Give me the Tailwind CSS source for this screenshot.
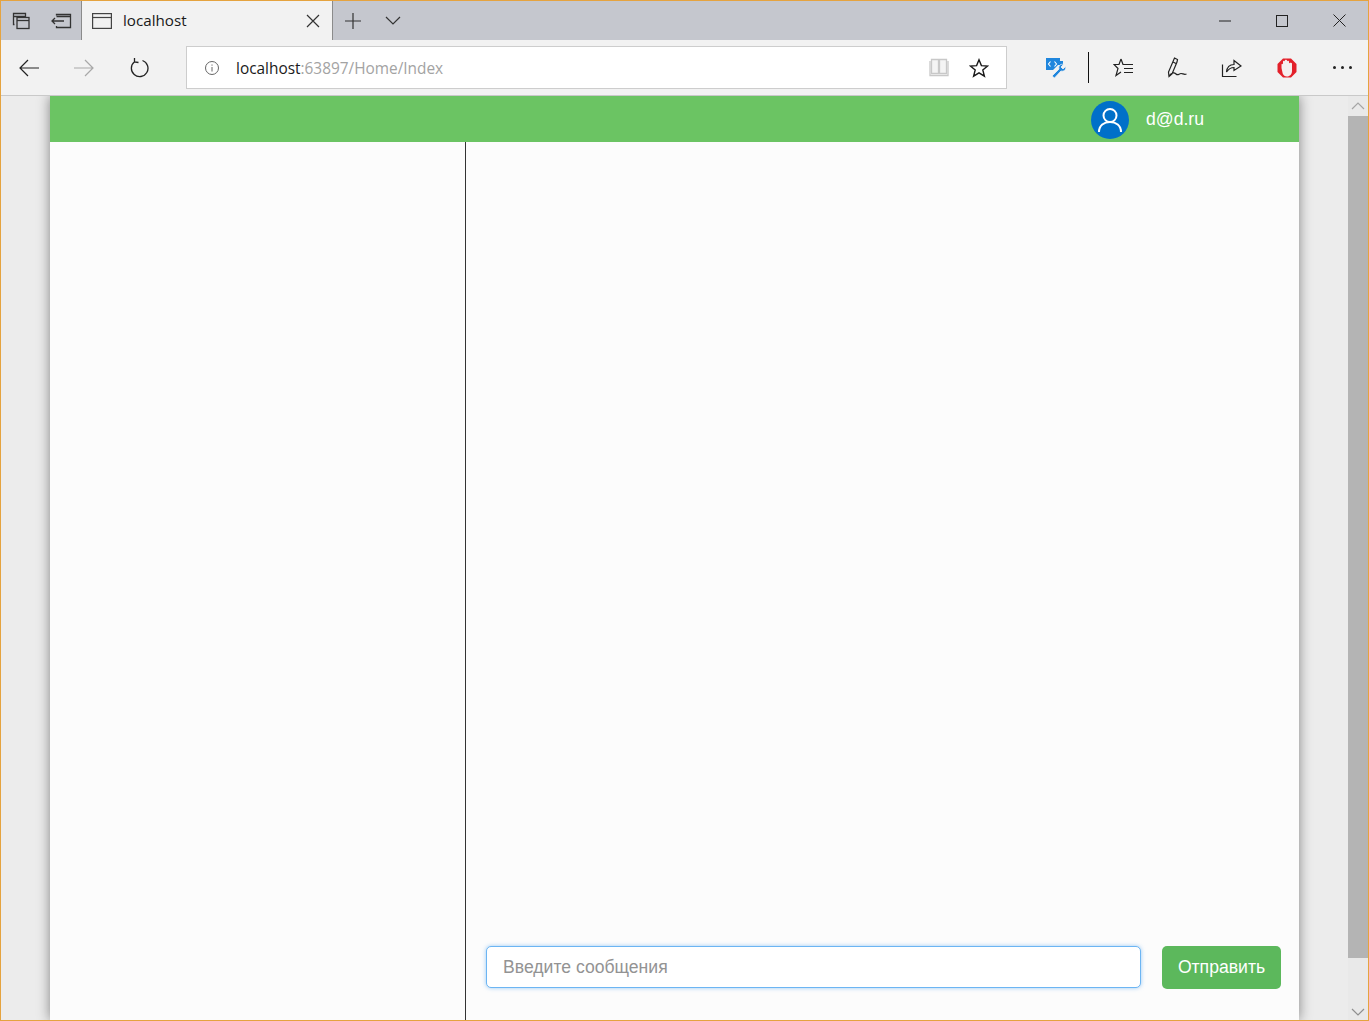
<!DOCTYPE html>
<html lang="en">
<head>
    <meta charset="UTF-8">
    <meta name="viewport" content="width=device-width, initial-scale=1.0">
    <title>localhost</title>
    <script src="https://cdn.jsdelivr.net/npm/@tailwindcss/browser@4"></script>
</head>
<body class="bg-[#ececec] overflow-hidden">
    <div class="w-[1369px] h-[1021px] border border-[#e5a33f] flex flex-col font-['Open_Sans',sans-serif] overflow-hidden">
        <!-- tab strip -->
        <div class="h-[39px] shrink-0 flex bg-[#c5c7ce] text-[#1a1a1a]">
            <div class="w-[40px] flex items-center justify-center">
                <svg width="20" height="20" viewBox="0 0 20 20" fill="none" stroke="#333" stroke-width="1.3"><path d="M3.5 13.5H2.5V2.5H14.5V6M2.5 5.5H14.5"/><rect x="6" y="6.5" width="12" height="11"/><path d="M6 9.5H18"/></svg>
            </div>
            <div class="w-[40px] flex items-center justify-center">
                <svg width="22" height="20" viewBox="0 0 22 20" fill="none" stroke="#333" stroke-width="1.3"><path d="M6.5 4.5V3.5H20.5V16.5H6.5V15M6.5 5.5H20.5M14 10H2M5 7L2 10L5 13"/></svg>
            </div>
            <div class="w-[252px] h-full bg-[#f2f2f2] border-x border-[#8b8b8b] flex items-center pl-[10px] pr-[12px]">
                <svg width="20" height="18" viewBox="0 0 20 18" fill="none" stroke="#444" stroke-width="1.2"><rect x="0.6" y="1.6" width="18.8" height="14.8"/><path d="M0.6 5.5H19.4"/></svg>
                <span class="ml-[11px] text-[15.2px] flex-1">localhost</span>
                <svg width="14" height="14" viewBox="0 0 14 14" stroke="#333" stroke-width="1.2"><path d="M1 1L13 13M13 1L1 13"/></svg>
            </div>
            <div class="w-[40px] flex items-center justify-center">
                <svg width="18" height="18" viewBox="0 0 18 18" stroke="#333" stroke-width="1.2"><path d="M9 1V17M1 9H17"/></svg>
            </div>
            <div class="w-[39px] flex items-center justify-center">
                <svg width="16" height="10" viewBox="0 0 16 10" fill="none" stroke="#333" stroke-width="1.2"><path d="M1 1L8 8L15 1"/></svg>
            </div>
            <div class="flex-1"></div>
            <div class="w-[57px] flex items-center justify-center">
                <svg width="12" height="2" viewBox="0 0 12 2" stroke="#222"><path d="M0 1H12"/></svg>
            </div>
            <div class="w-[57px] mr-[1px] flex items-center justify-center">
                <svg width="12" height="12" viewBox="0 0 12 12" fill="none" stroke="#222"><rect x="0.5" y="0.5" width="11" height="11"/></svg>
            </div>
            <div class="w-[57px] flex items-center justify-center">
                <svg width="13" height="13" viewBox="0 0 13 13" stroke="#222"><path d="M0.5 0.5L12.5 12.5M12.5 0.5L0.5 12.5"/></svg>
            </div>
        </div>

        <!-- address bar row -->
        <div class="relative z-10 h-[56px] shrink-0 bg-[#f2f2f2] border-b border-[#c9c9c9] flex items-center">
            <div class="w-[55px] flex justify-center">
                <svg width="20" height="18" viewBox="0 0 20 18" fill="none" stroke="#222" stroke-width="1.2"><path d="M20 9H1M9 1L1 9L9 17"/></svg>
            </div>
            <div class="w-[55px] flex justify-center">
                <svg width="20" height="18" viewBox="0 0 20 18" fill="none" stroke="#a8a8a8" stroke-width="1.2"><path d="M0 9H19M11 1L19 9L11 17"/></svg>
            </div>
            <div class="w-[55px] flex justify-center">
                <svg width="20" height="20" viewBox="0 0 20 20" fill="none" stroke="#222" stroke-width="1.3"><path d="M5.5 3.8A8.3 8.3 0 1 0 13.5 2.5M5.5 0L5.5 4L9.5 4.5"/></svg>
            </div>
            <div class="ml-[20px] w-[821px] h-[43px] bg-white border border-[#cdcdcd] flex items-center pl-[17px] pr-[17px]">
                <svg width="16" height="16" viewBox="0 0 16 16" fill="none" stroke="#666"><circle cx="8" cy="8" r="6.5"/><path d="M8 7V11.5M8 4.5V5.7"/></svg>
                <span class="ml-[16px] pt-[2px] text-[15.4px] flex-1 leading-none"><span class="text-[#1a1a1a]">localhost</span><span class="text-[#a3a3a3]">:63897/Home/Index</span></span>
                <svg width="20" height="19" viewBox="0 0 20 19" fill="#f4f4f4" stroke="#c8c8c8" stroke-width="1.3"><path d="M2.5 1.5H9.5V15.5H2.5ZM10.5 1.5H17.5V15.5H10.5Z"/><path d="M1 3V17.5H19V3" fill="none"/></svg>
                <svg class="ml-[20px]" width="20" height="20" viewBox="0 0 20 20" fill="none" stroke="#1a1a1a" stroke-width="1.4"><path d="M10 1.8L12.4 7.6L18.6 8L13.8 12L15.4 18.2L10 14.8L4.6 18.2L6.2 12L1.4 8L7.6 7.6Z"/></svg>
            </div>
            <div class="ml-[35px] w-[28px] flex justify-center">
                <svg width="22" height="21" viewBox="0 0 22 21" fill="none"><path d="M1 1H15V4H18V8H13L8 13H1Z" fill="#1f86dd"/><path d="M5.5 4.5L3.5 7L5.5 9.5M9.5 4.5L11.5 7L9.5 9.5" stroke="#fff" stroke-width="1.1"/><path d="M7 19L14 12C13 9 15.5 6.5 18.5 7.5L16 10L18 12L20.5 9.5C21.5 12.5 19 15 16 14L9.5 21Z" fill="#1f86dd" stroke="#f2f2f2" stroke-width="0.8"/></svg>
            </div>
            <div class="ml-[18px] w-px h-[31px] bg-[#111]"></div>
            <div class="ml-[20px] w-[28px] flex justify-center">
                <svg width="21" height="19" viewBox="0 0 21 19" fill="none" stroke="#222" stroke-width="1.2"><path d="M8 1L10 6.5H20M8 1L6 6.5H1L5 10.5L3 17.5L8 14M11 10.5H20M11 14.5H20"/></svg>
            </div>
            <div class="ml-[26px] w-[28px] flex justify-center">
                <svg width="20" height="21" viewBox="0 0 20 21" fill="none" stroke="#222" stroke-width="1.2"><path d="M7.5 1L10.5 2.5L10 5L5 17L2 19.5L1.5 15ZM6 5L9 6.5M2 19.5C4 15.5 7 15 9 17C11 19 12 16.5 14 16.5C16 16.5 17 18 19.5 17"/></svg>
            </div>
            <div class="ml-[26px] w-[28px] flex justify-center">
                <svg width="21" height="20" viewBox="0 0 21 20" fill="none" stroke="#222" stroke-width="1.2"><path d="M1.5 6.5V18.5H15.5M5.5 14C6 9 9 6.5 13 6.5V2.5L20 8L13 12.5V9.5C10 9.5 7.5 11 5.5 14Z"/></svg>
            </div>
            <div class="ml-[28px] w-[28px] flex justify-center">
                <svg width="20" height="20" viewBox="0 0 20 20"><path d="M6 0.5H14L19.5 6V14L14 19.5H6L0.5 14V6Z" fill="#e3202a"/><path d="M4.5 10V6.5C4.5 5.5 6 5.5 6 6.5V3.5C6 2.5 7.8 2.5 7.8 3.5V2.5C7.8 1.5 10 1.5 10 2.5V3.5C10 2.5 12 2.5 12 3.5V5.5C12 4.5 15 4.5 15 5.5V13C15 16 13 18.5 10 18.5C7.8 18.5 6.5 17.5 5.7 15.5Z" fill="#f5eeee"/></svg>
            </div>
            <div class="ml-[27px] w-[28px] flex justify-center gap-[5px]">
                <span class="w-[3px] h-[3px] rounded-full bg-[#222]"></span>
                <span class="w-[3px] h-[3px] rounded-full bg-[#222]"></span>
                <span class="w-[3px] h-[3px] rounded-full bg-[#222]"></span>
            </div>
        </div>

        <!-- page -->
        <div class="flex-1 min-h-0 flex font-['Liberation_Sans',sans-serif]">
            <div class="w-[49px] shrink-0"></div>
            <div class="w-[1249px] shrink-0 flex flex-col bg-[#fcfcfc] shadow-[0_0_12px_rgba(0,0,0,0.45)]">
                <div class="h-[46px] shrink-0 bg-[#6bc463] flex items-center pl-[1041px]">
                    <div class="w-[38px] h-[38px] mt-[2px] rounded-full bg-[#0070c9] flex items-center justify-center">
                        <svg width="24" height="26" viewBox="0 0 24 26" fill="none" stroke="#fff" stroke-width="2"><circle cx="12" cy="8.5" r="6.5"/><path d="M1 25C1 18.5 6 15 12 15C18 15 23 18.5 23 25"/></svg>
                    </div>
                    <span class="ml-[17px] text-[17.6px] text-white">d@d.ru</span>
                </div>
                <div class="flex-1 min-h-0 flex">
                    <div class="w-[416px] shrink-0 border-r border-[#333]"></div>
                    <div class="flex-1 flex items-end gap-[21px] pl-[20px] pr-[18px] pb-[31px]">
                        <div class="flex-1 h-[42px] mb-px bg-white border border-[#6cb5f3] rounded-[5px] shadow-[0_0_4px_rgba(72,160,240,0.55)] flex items-center px-[16px] text-[17.6px] text-[#939393]">Введите сообщения</div>
                        <button class="w-[119px] h-[43px] bg-[#5cb85c] rounded-[5px] text-[17.6px] text-white">Отправить</button>
                    </div>
                </div>
            </div>
            <div class="flex-1"></div>
            <div class="w-[20px] shrink-0 flex flex-col bg-[#e9e9e9]">
                <div class="h-[20px] flex items-center justify-center">
                    <svg width="14" height="8" viewBox="0 0 14 8" fill="none" stroke="#a5a5a5" stroke-width="1.2"><path d="M1 7L7 1L13 7"/></svg>
                </div>
                <div class="h-[842px] bg-[#b4b4b4]"></div>
                <div class="flex-1 flex items-end justify-center pb-[4px]">
                    <svg width="14" height="8" viewBox="0 0 14 8" fill="none" stroke="#8f8f8f" stroke-width="1.2"><path d="M1 1L7 7L13 1"/></svg>
                </div>
            </div>
        </div>
    </div>
</body>
</html>
